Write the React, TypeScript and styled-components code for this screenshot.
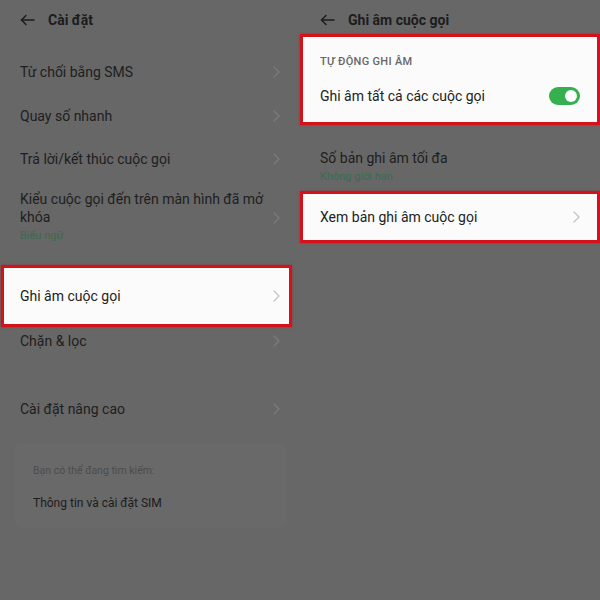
import styled, { createGlobalStyle } from "styled-components";

const GlobalStyle = createGlobalStyle`
    html, body {
        margin: 0;
        padding: 0;
        background: #676767;
    }
    body {
        font-family: Roboto, "Noto Sans", "Liberation Sans", sans-serif;
        color: #222;
    }
`

const Screen = styled.div`
    width: 600px;
    height: 600px;
    display: flex;
    background: #676767;
    overflow: hidden;
`

const Panel = styled.div`
    width: 300px;
    display: flex;
    flex-direction: column;
`

const Header = styled.div`
    height: 40px;
    display: flex;
    align-items: center;
    gap: 13px;
    padding-left: 20px;
    h1{
        margin: 0;
        font-size: 14px;
        font-weight: 700;
        color: #1c1c1c;
    }
`

const List = styled.div<{ $top: number }>`
    display: flex;
    flex-direction: column;
    padding-top: ${p => p.$top}px;
`

const Row = styled.div<{ $h?: number; $mt?: number; $hl?: boolean; $right?: number }>`
    box-sizing: border-box;
    display: flex;
    align-items: center;
    justify-content: space-between;
    min-height: ${p => p.$h ?? 43}px;
    margin-top: ${p => p.$mt ?? 0}px;
    margin-right: ${p => p.$right ?? 0}px;
    padding: 0 ${p => (p.$hl ? 17 : 20) - (p.$right ?? 0)}px 0 20px;
    font-size: 14px;
    color: #1e1e1e;
    ${p => p.$hl && `
        margin-left: 1px;
        padding-left: 16px;
        background: #fbfbfb;
        border: 3px solid #d3121c;
        box-shadow: 0 0 2px rgba(200, 20, 30, 0.7);
        color: #222;
    `}
`

const RowText = styled.div<{ $pt?: number; $pb?: number }>`
    align-self: flex-start;
    display: flex;
    flex-direction: column;
    line-height: 18px;
    padding: ${p => p.$pt ?? 10}px 0 ${p => p.$pb ?? 12}px;
    max-width: 250px;
`

const Sub = styled.span`
    font-size: 11px;
    line-height: 14px;
    margin-top: 3px;
    color: #3a6c4c;
`

const Block = styled.div<{ $mt?: number }>`
    box-sizing: border-box;
    margin-top: ${p => p.$mt ?? 0}px;
    background: #fbfbfb;
    border: 3px solid #d3121c;
    box-shadow: 0 0 2px rgba(200, 20, 30, 0.7);
    padding: 0 17px 0 17px;
`

const Caption = styled.div`
    font-size: 11px;
    font-weight: 500;
    letter-spacing: 0.3px;
    color: #676767;
    padding-top: 18px;
    line-height: 14px;
`

const BlockRow = styled.div<{ $h: number }>`
    height: ${p => p.$h}px;
    display: flex;
    align-items: center;
    justify-content: space-between;
    font-size: 14px;
    color: #222;
`

const Toggle = styled.div`
    width: 31px;
    height: 18px;
    border-radius: 9px;
    background: #34b04f;
    display: flex;
    align-items: center;
    justify-content: flex-end;
    padding: 0 3px;
    box-sizing: border-box;
    &::after{
        content: "";
        width: 12px;
        height: 12px;
        border-radius: 50%;
        background: #fff;
    }
`

const SearchCard = styled.div`
    margin: 13px 13px 0 14px;
    height: 84px;
    box-sizing: border-box;
    border-radius: 8px;
    background: #696969;
    padding: 20px 19px 0;
    display: flex;
    flex-direction: column;
    gap: 19px;
    .label{
        font-size: 10.5px;
        color: #4c4c4c;
    }
    .item{
        font-size: 12px;
        color: #1c1c1c;
    }
`

function Back() {
    return (
        <svg width="15" height="12" viewBox="0 0 15 12" fill="none" stroke="#1c1c1c" strokeWidth="1.5" strokeLinecap="round" strokeLinejoin="round">
            <path d="M14 6H1.5" />
            <path d="M6 1.5L1.5 6L6 10.5" />
        </svg>
    )
}

function Chevron({ light }: { light?: boolean }) {
    return (
        <svg width="7" height="12" viewBox="0 0 7 12" fill="none" stroke={light ? "#c3c3c3" : "#7b7b7b"} strokeWidth="1.3" strokeLinecap="round" strokeLinejoin="round">
            <path d="M1 1l5 5-5 5" />
        </svg>
    )
}

export default function App() {
    return (
        <>
            <GlobalStyle />
            <Screen>
                <Panel>
                    <Header>
                        <Back />
                        <h1>Cài đặt</h1>
                    </Header>
                    <List $top={10}>
                        <Row $h={44}>Từ chối bằng SMS<Chevron /></Row>
                        <Row>Quay số nhanh<Chevron /></Row>
                        <Row>Trả lời/kết thúc cuộc gọi<Chevron /></Row>
                        <Row>
                            <RowText>
                                Kiểu cuộc gọi đến trên màn hình đã mở khóa
                                <Sub>Biểu ngữ</Sub>
                            </RowText>
                            <Chevron />
                        </Row>
                        <Row $hl $h={62} $mt={10} $right={8}>Ghi âm cuộc gọi<Chevron light /></Row>
                        <Row $h={28}>Chặn &amp; lọc<Chevron /></Row>
                        <Row $h={44} $mt={32}>Cài đặt nâng cao<Chevron /></Row>
                    </List>
                    <SearchCard>
                        <span className="label">Bạn có thể đang tìm kiếm:</span>
                        <span className="item">Thông tin và cài đặt SIM</span>
                    </SearchCard>
                </Panel>
                <Panel>
                    <Header>
                        <Back />
                        <h1>Ghi âm cuộc gọi</h1>
                    </Header>
                    <Block $mt={-6}>
                        <Caption>TỰ ĐỘNG GHI ÂM</Caption>
                        <BlockRow $h={53}>
                            Ghi âm tất cả các cuộc gọi
                            <Toggle />
                        </BlockRow>
                    </Block>
                    <Row $h={66}>
                        <RowText $pt={24} $pb={6}>
                            Số bản ghi âm tối đa
                            <Sub>Không giới hạn</Sub>
                        </RowText>
                    </Row>
                    <Block>
                        <BlockRow $h={46}>
                            Xem bản ghi âm cuộc gọi
                            <Chevron light />
                        </BlockRow>
                    </Block>
                </Panel>
            </Screen>
        </>
    )
}
